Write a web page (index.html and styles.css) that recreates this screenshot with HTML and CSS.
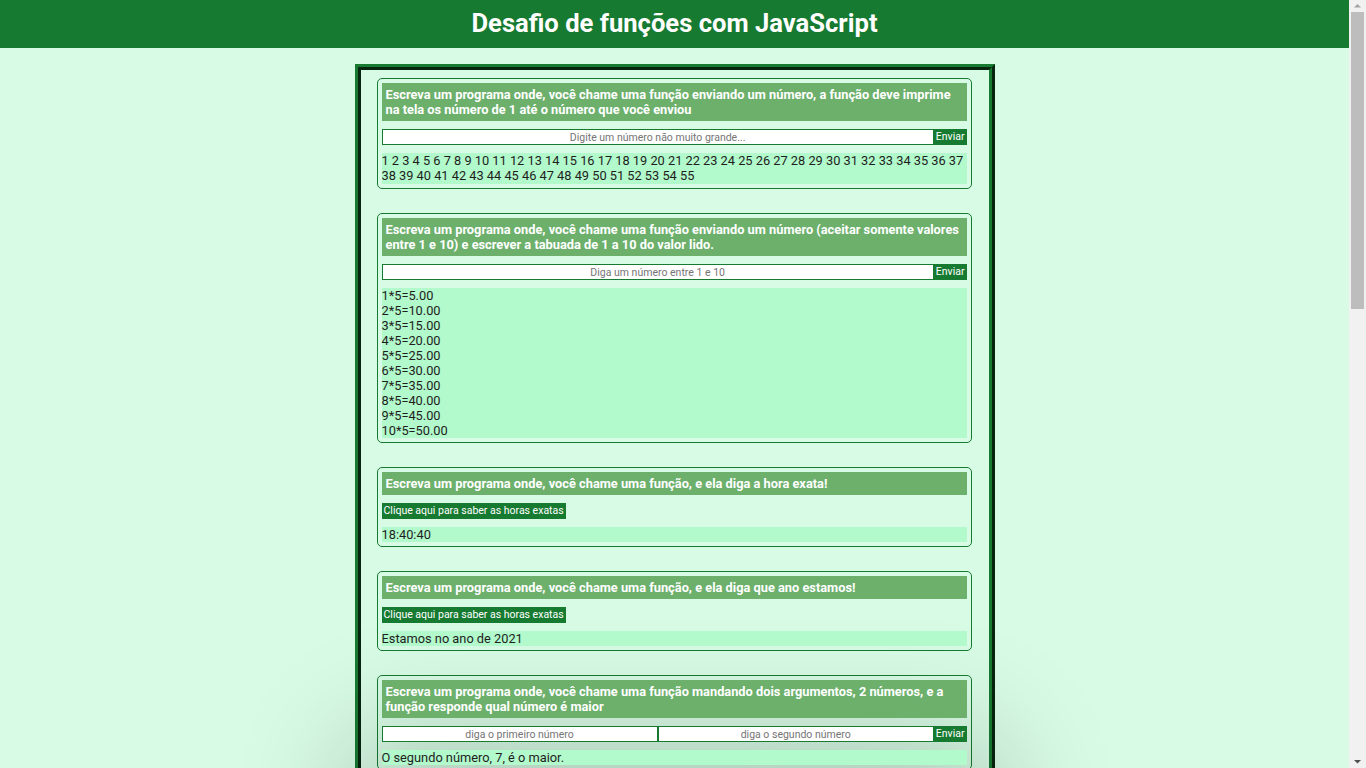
FILE: index.html
```html
<!DOCTYPE html>
<html lang="pt-BR">
<head>
<meta charset="utf-8">
<title>Desafio de funções com JavaScript</title>
<link rel="stylesheet" href="styles.css">
</head>
<body>
<header class="topbar">
  <h1 class="title">Desafio de funções com JavaScript</h1>
</header>
<main class="container">
  <section class="card">
    <h2 class="card-title">Escreva um programa onde, você chame uma função enviando um número, a função deve imprime na tela os número de 1 até o número que você enviou</h2>
    <div class="form-row">
      <input class="field" type="text" placeholder="Digite um número não muito grande...">
      <button class="btn">Enviar</button>
    </div>
    <div class="output output-numbers">1 2 3 4 5 6 7 8 9 10 11 12 13 14 15 16 17 18 19 20 21 22 23 24 25 26 27 28 29 30 31 32 33 34 35 36 37 38 39 40 41 42 43 44 45 46 47 48 49 50 51 52 53 54 55</div>
  </section>

  <section class="card">
    <h2 class="card-title">Escreva um programa onde, você chame uma função enviando um número (aceitar somente valores entre 1 e 10) e escrever a tabuada de 1 a 10 do valor lido.</h2>
    <div class="form-row">
      <input class="field" type="text" placeholder="Diga um número entre 1 e 10">
      <button class="btn">Enviar</button>
    </div>
    <div class="output">1*5=5.00<br>2*5=10.00<br>3*5=15.00<br>4*5=20.00<br>5*5=25.00<br>6*5=30.00<br>7*5=35.00<br>8*5=40.00<br>9*5=45.00<br>10*5=50.00</div>
  </section>

  <section class="card">
    <h2 class="card-title">Escreva um programa onde, você chame uma função, e ela diga a hora exata!</h2>
    <button class="btn btn-wide">Clique aqui para saber as horas exatas</button>
    <div class="output">18:40:40</div>
  </section>

  <section class="card">
    <h2 class="card-title">Escreva um programa onde, você chame uma função, e ela diga que ano estamos!</h2>
    <button class="btn btn-wide">Clique aqui para saber as horas exatas</button>
    <div class="output">Estamos no ano de 2021</div>
  </section>

  <section class="card">
    <h2 class="card-title">Escreva um programa onde, você chame uma função mandando dois argumentos, 2 números, e a função responde qual número é maior</h2>
    <div class="form-row">
      <input class="field" type="text" placeholder="diga o primeiro número">
      <input class="field" type="text" placeholder="diga o segundo número">
      <button class="btn">Enviar</button>
    </div>
    <div class="output">O segundo número, 7, é o maior.</div>
  </section>

  <section class="card card-raised">
    <h2 class="card-title">Escreva um programa onde, você chame uma função mandando dois argumentos, 2 números, e a função responde a soma, a subtração, a multiplicação e a divisão dos números</h2>
    <div class="form-row">
      <input class="field" type="text" placeholder="diga o primeiro número">
      <input class="field" type="text" placeholder="diga o segundo número">
      <button class="btn">Enviar</button>
    </div>
    <div class="output">Soma: 12<br>Subtração: -2<br>Multiplicação: 35<br>Divisão: 0.71</div>
  </section>

  <section class="card">
    <h2 class="card-title">Escreva um programa onde, você chame uma função enviando uma palavra, e a função responde quantas letras a palavra tem</h2>
    <div class="form-row">
      <input class="field" type="text" placeholder="Digite uma palavra">
      <button class="btn">Enviar</button>
    </div>
    <div class="output">A palavra tem 10 letras</div>
  </section>

  <section class="card">
    <h2 class="card-title">Escreva um programa onde, você chame uma função enviando o seu ano de nascimento, e a função responde a sua idade</h2>
    <div class="form-row">
      <input class="field" type="text" placeholder="Digite o ano em que você nasceu">
      <button class="btn">Enviar</button>
    </div>
    <div class="output">Você tem 25 anos</div>
  </section>

  <section class="card">
    <h2 class="card-title">Escreva um programa onde, você chame uma função enviando uma temperatura em graus Celsius, e a função converte para Fahrenheit</h2>
    <div class="form-row">
      <input class="field" type="text" placeholder="Digite a temperatura em °C">
      <button class="btn">Enviar</button>
    </div>
    <div class="output">30°C equivalem a 86°F</div>
  </section>

  <section class="card">
    <h2 class="card-title">Escreva um programa onde, você chame uma função enviando um número, e a função responde se ele é par ou ímpar</h2>
    <div class="form-row">
      <input class="field" type="text" placeholder="Digite um número">
      <button class="btn">Enviar</button>
    </div>
    <div class="output">O número 7 é ímpar</div>
  </section>

  <section class="card">
    <h2 class="card-title">Escreva um programa onde, você chame uma função enviando o seu nome, e a função responde com uma saudação</h2>
    <div class="form-row">
      <input class="field" type="text" placeholder="Digite o seu nome">
      <button class="btn">Enviar</button>
    </div>
    <div class="output">Olá, seja bem-vindo!</div>
  </section>

  <section class="card">
    <h2 class="card-title">Escreva um programa onde, você chame uma função enviando três notas, e a função responde a média do aluno</h2>
    <div class="form-row">
      <input class="field" type="text" placeholder="nota 1">
      <input class="field" type="text" placeholder="nota 2">
      <input class="field" type="text" placeholder="nota 3">
      <button class="btn">Enviar</button>
    </div>
    <div class="output">A média do aluno é 7.50</div>
  </section>

  <section class="card">
    <h2 class="card-title">Escreva um programa onde, você chame uma função enviando um número, e a função responde o fatorial desse número</h2>
    <div class="form-row">
      <input class="field" type="text" placeholder="Digite um número">
      <button class="btn">Enviar</button>
    </div>
    <div class="output">5! = 120</div>
  </section>
</main>

<div class="scrollbar" aria-hidden="true">
  <svg class="sb-arrow" width="17" height="12" viewBox="0 0 17 12"><path d="M5 7.5 L8.5 4 L12 7.5 Z" fill="#a3a3a3"/></svg>
  <div class="sb-thumb"></div>
  <svg class="sb-arrow sb-arrow-down" width="17" height="12" viewBox="0 0 17 12"><path d="M5 4 L8.5 7.5 L12 4 Z" fill="#505050"/></svg>
</div>
</body>
</html>
```

FILE: styles.css
```css
* {
  box-sizing: border-box;
}

body {
  margin: 0 17px 0 0;
  background: #d8fbe5;
  font-family: Roboto, "Noto Sans", "Liberation Sans", sans-serif;
  color: #1e1e1e;
}

.topbar {
  background: #177a31;
  height: 48px;
}

.title {
  margin: 0;
  color: #ffffff;
  font-size: 25.6px;
  font-weight: 700;
  line-height: 46px;
  text-align: center;
}

.container {
  width: 640px;
  margin: 16px auto 16px;
  border: 6px ridge #177a31;
  padding: 8px 17px 1px 16px;
}

.card {
  display: flex;
  flex-direction: column;
  gap: 8px;
  border: 1px solid #177a31;
  border-radius: 5px;
  padding: 4px;
  margin-bottom: 24px;
}

.card-raised {
  box-shadow: 0 -30px 120px 25px rgba(0, 0, 0, 0.22);
}

.card-title {
  margin: 0;
  background: #6cb06c;
  color: #ffffff;
  font-size: 12.8px;
  font-weight: 700;
  line-height: 15px;
  padding: 4px;
}

.form-row {
  display: flex;
  height: 16px;
}

.field {
  flex: 1 1 0;
  min-width: 0;
  height: 16px;
  border: 1px solid #177a31;
  background: #ffffff;
  padding: 0;
  margin: 0;
  font-family: Roboto, "Noto Sans", sans-serif;
  font-size: 10.5px;
  text-align: center;
  color: #222;
  outline: none;
}

.field::placeholder {
  color: #757575;
}

.btn {
  height: 16px;
  border: none;
  margin: 0;
  padding: 0 2px;
  background: #177a31;
  color: #ffffff;
  font-family: Roboto, "Noto Sans", sans-serif;
  font-size: 10.5px;
  line-height: 16px;
  cursor: pointer;
}

.btn-wide {
  align-self: flex-start;
}

.output {
  background: #b2f9cb;
  font-size: 12.8px;
  line-height: 15px;
  color: #1e1e1e;
}

.output-numbers {
  padding-bottom: 1px;
}

.scrollbar {
  position: fixed;
  top: 0;
  right: 0;
  width: 17px;
  height: 100vh;
  background: #f1f1f1;
  display: flex;
  flex-direction: column;
}

.sb-arrow {
  display: block;
  flex: none;
}

.sb-thumb {
  height: 297px;
  margin: 0 2px;
  background: #bdbdbd;
}

.sb-arrow-down {
  margin-top: auto;
}
```
